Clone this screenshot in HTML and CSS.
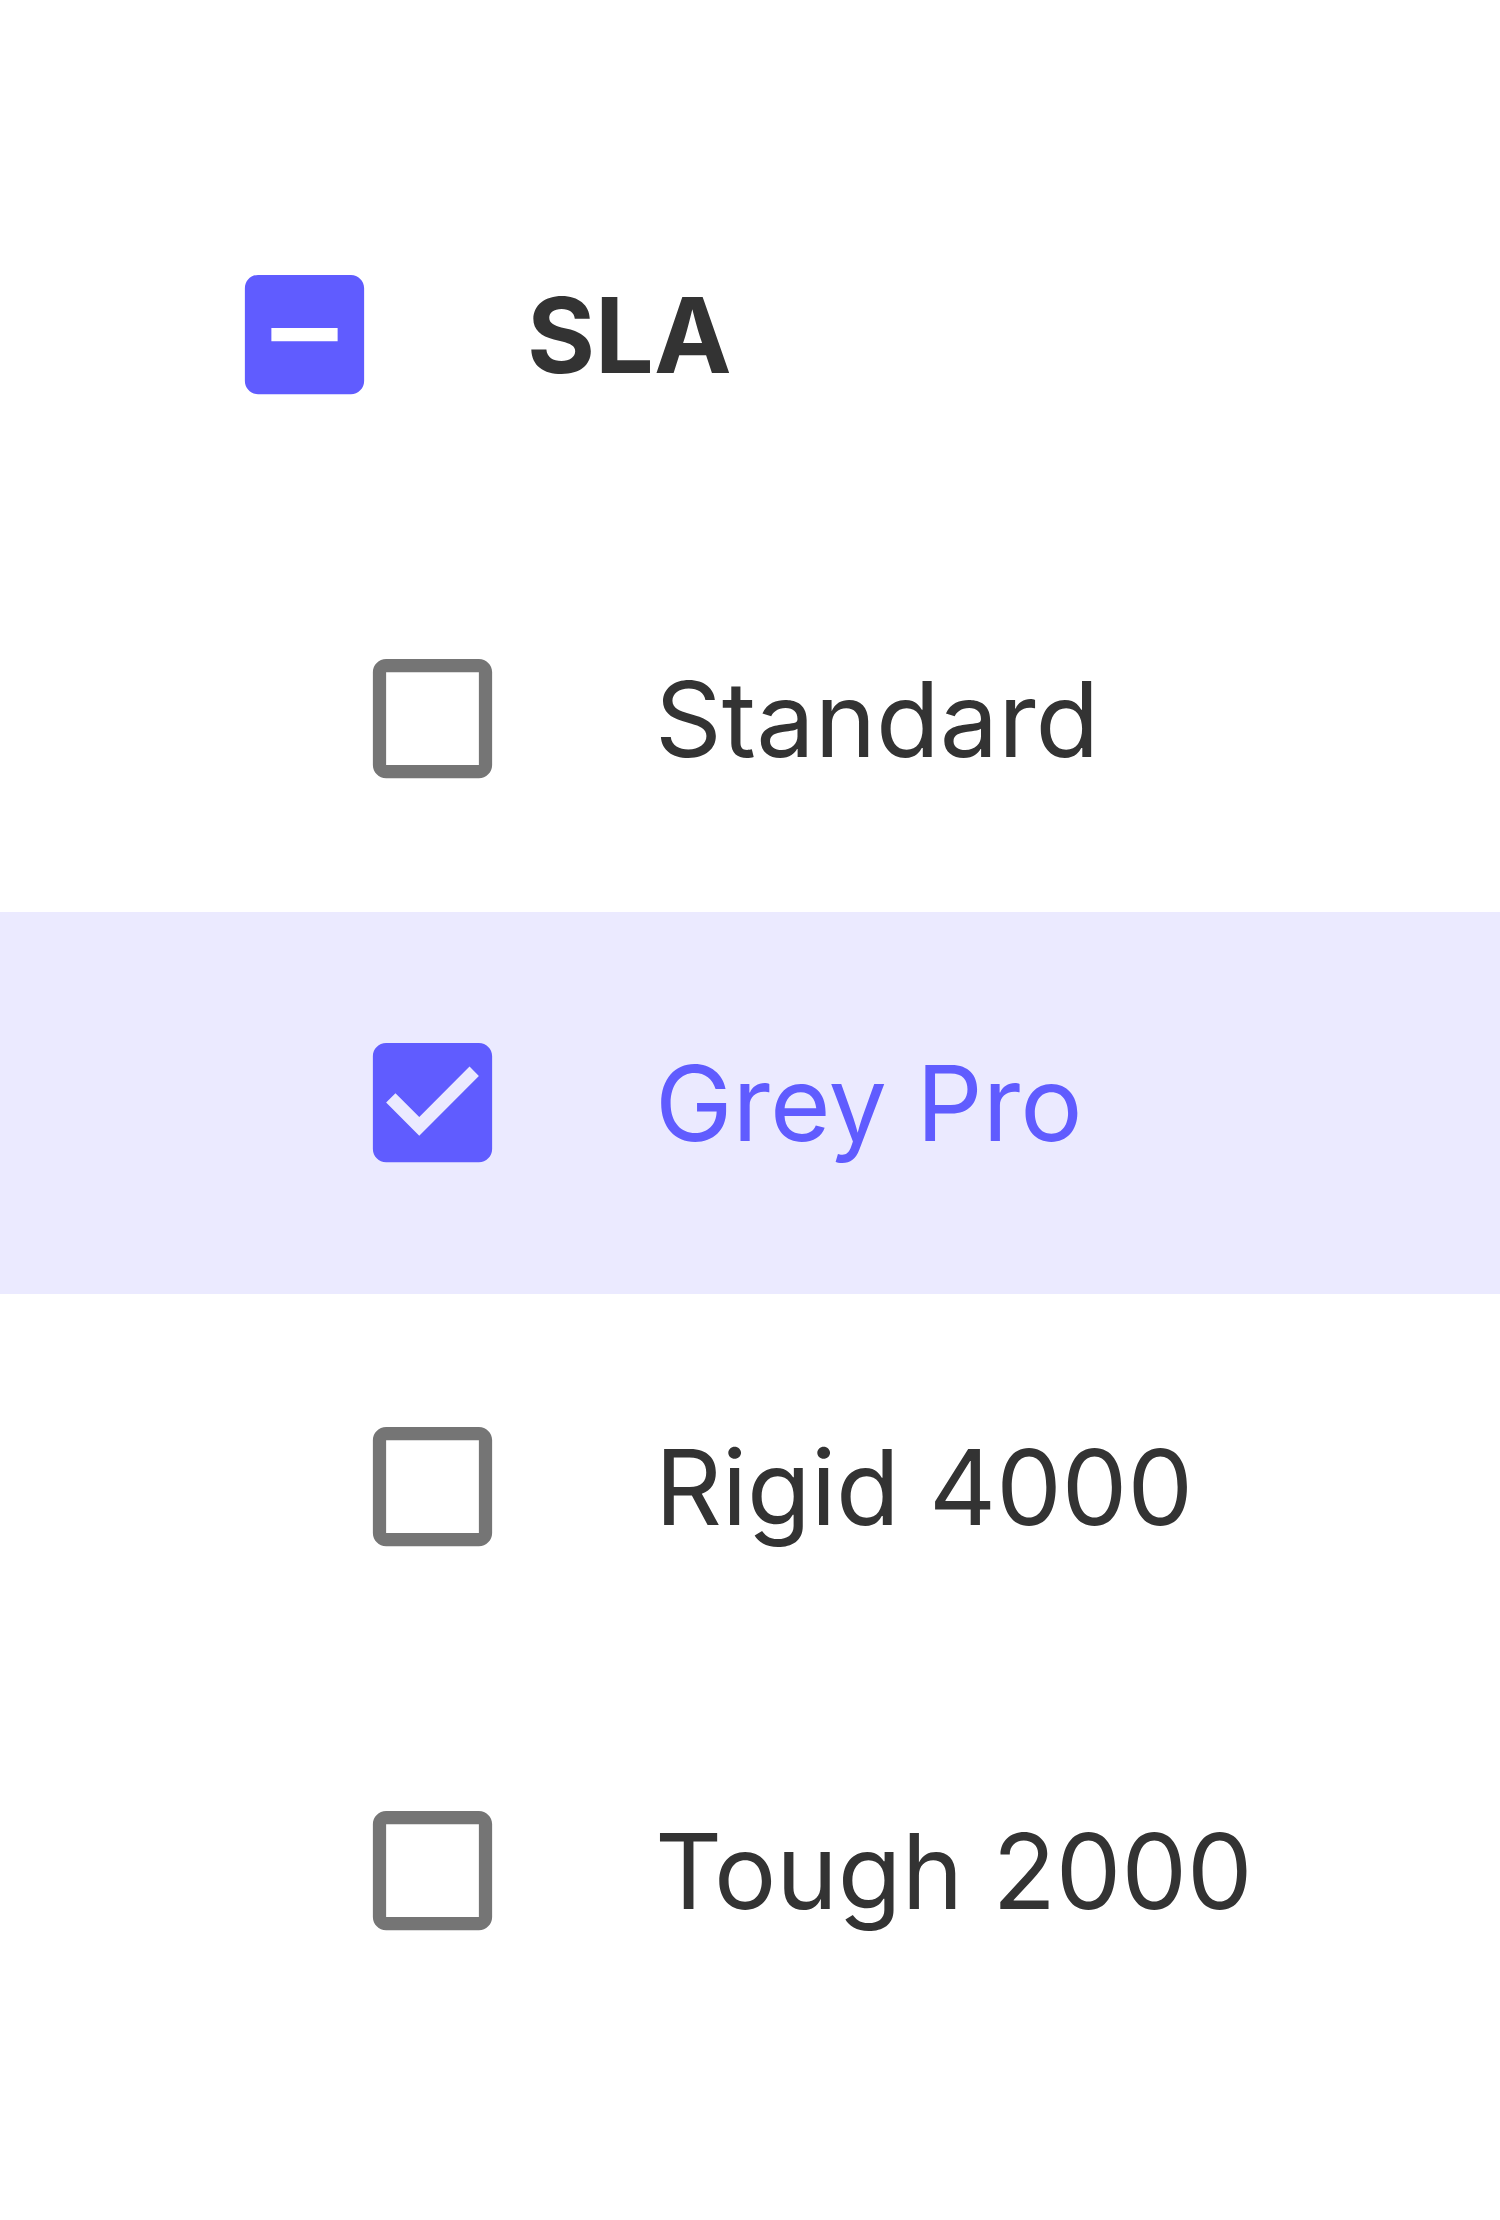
FILE: index.html
```html
<!DOCTYPE html>
<html>
<head>
    <meta charset="utf-8">
    <title>SLA</title>
    <link rel="stylesheet" href="styles.css">
</head>
<body>

    <ul class="tree">
        <li class="node">
            <div class="row parent">
                <svg class="box on" viewBox="0 0 24 24"><path d="M19 3H5c-1.1 0-2 .9-2 2v14c0 1.1.9 2 2 2h14c1.1 0 2-.9 2-2V5c0-1.1-.9-2-2-2zm-2 10H7v-2h10v2z" /></svg>
                <span class="label">SLA</span>
            </div>
            <ul class="children">
                <li>
                    <div class="row">
                        <svg class="box" viewBox="0 0 24 24"><path d="M19 5v14H5V5h14m0-2H5c-1.1 0-2 .9-2 2v14c0 1.1.9 2 2 2h14c1.1 0 2-.9 2-2V5c0-1.1-.9-2-2-2z" /></svg>
                        <span class="label">Standard</span>
                    </div>
                </li>
                <li>
                    <div class="row selected">
                        <svg class="box on" viewBox="0 0 24 24"><path d="M19 3H5c-1.11 0-2 .9-2 2v14c0 1.1.89 2 2 2h14c1.11 0 2-.9 2-2V5c0-1.1-.89-2-2-2zm-9 14l-5-5 1.41-1.41L10 14.17l7.59-7.59L19 8l-9 9z" /></svg>
                        <span class="label">Grey Pro</span>
                    </div>
                </li>
                <li>
                    <div class="row">
                        <svg class="box" viewBox="0 0 24 24"><path d="M19 5v14H5V5h14m0-2H5c-1.1 0-2 .9-2 2v14c0 1.1.9 2 2 2h14c1.1 0 2-.9 2-2V5c0-1.1-.9-2-2-2z" /></svg>
                        <span class="label">Rigid 4000</span>
                    </div>
                </li>
                <li>
                    <div class="row">
                        <svg class="box" viewBox="0 0 24 24"><path d="M19 5v14H5V5h14m0-2H5c-1.1 0-2 .9-2 2v14c0 1.1.9 2 2 2h14c1.1 0 2-.9 2-2V5c0-1.1-.9-2-2-2z" /></svg>
                        <span class="label">Tough 2000</span>
                    </div>
                </li>
            </ul>
        </li>
    </ul>

</body>
</html>
```

FILE: styles.css
```css
body {
    margin: 0;
    padding: 0;
    background: #fff;
    font-family: Inter, "Noto Sans", sans-serif;
    color: #333;
}

.tree, .children {
    list-style: none;
    margin: 0;
    padding: 0;
}

.tree {
    padding-top: 143.5px;
}

.node, .children {
    display: flex;
    flex-direction: column;
    gap: 2px;
}

.row {
    display: flex;
    align-items: center;
    gap: 143px;
    height: 382px;
    padding-left: 225px;
}

.children .row {
    padding-left: 353px;
}

.box {
    width: 159px;
    height: 159px;
    flex: none;
    fill: #757575;
}

.box.on {
    fill: #605cff;
}

.label {
    font-size: 104px;
    line-height: 1;
    white-space: nowrap;
}

.parent .label {
    font-weight: 700;
}

.selected {
    background: #ebeaff;
}

.selected .label {
    color: #605cff;
}
```
